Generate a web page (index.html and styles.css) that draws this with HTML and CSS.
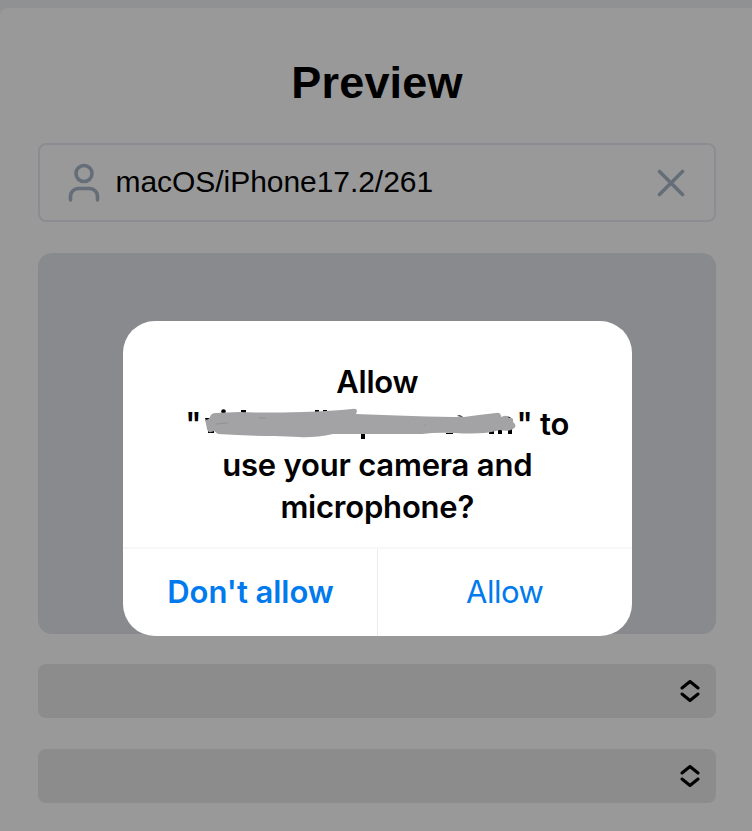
FILE: index.html
```html
<!DOCTYPE html>
<html lang="en">
<head>
<meta charset="utf-8">
<title>Preview</title>
<link rel="stylesheet" href="styles.css">
</head>
<body>
<main class="sheet">
  <h1 class="title">Preview</h1>
  <div class="field">
    <svg class="user" viewBox="0 0 34 40" width="34" height="40"><circle cx="17" cy="10.5" r="8"/><path d="M3.5 37v-3.5a8 8 0 0 1 8-8h11a8 8 0 0 1 8 8V37"/></svg>
    <span class="name">macOS/iPhone17.2/261</span>
    <svg class="clear" viewBox="0 0 28 28" width="28" height="28"><path d="M2.5 2.5l23 23M25.5 2.5l-23 23"/></svg>
  </div>
  <div class="video"></div>
  <div class="select"><svg class="chevrons" viewBox="0 0 20 24" width="20" height="24"><path d="M2 9l8-6.5L18 9M2 15l8 6.5L18 15"/></svg></div>
  <div class="select"><svg class="chevrons" viewBox="0 0 20 24" width="20" height="24"><path d="M2 9l8-6.5L18 9M2 15l8 6.5L18 15"/></svg></div>
</main>
<div class="dialog" role="alertdialog">
  <div class="message">
    <span class="line">Allow</span>
    <span class="line"><span>"</span><svg class="redaction" viewBox="203 404 314 40" width="314" height="40"><path class="trace" d="M205 419h4l2 4h-5zM208 432h6v2h-6zM241 411h5v3h-5zM315 411h4v3h-4zM323 411h4v3h-4zM361 434h4v6h-4zM446 434h7v1h-7zM489 432h5v3h-5zM498 430h4v5h-4zM508 429h4v6h-4zM457 417q3-2 6 1zM505 419q3-3 6 0z"/><circle class="trace" cx="223.5" cy="412.5" r="2.3"/><path class="brush" d="M205 420Q208 422 210 418Q211 414 216 414L239 413Q261 414 303 413Q332 412 352 410Q359 409 356 415Q382 416 412 417Q443 418 464 418Q478 416 496 414Q501 413 501 418Q508 415 509 419Q514 418 513 423Q518 427 513 430Q508 433 500 431Q484 436 455 434Q436 433 422 435L333 435Q314 439 299 438L275 437Q246 437 218 435L214 432Q208 435 207 430Z"/><path class="gap" d="M216 425l11-1M259 419h6M425 426h1"/></svg><span>" to</span></span>
    <span class="line">use your camera and</span>
    <span class="line">microphone?</span>
  </div>
  <div class="actions">
    <button class="deny">Don't allow</button>
    <button class="accept">Allow</button>
  </div>
</div>
</body>
</html>
```

FILE: styles.css
```css
* { box-sizing: border-box; }
body {
  margin: 0;
  height: 831px;
  padding-top: 8px;
  overflow: hidden;
  background: #8f9193;
  font-family: "Liberation Sans", Arial, sans-serif;
}
.sheet {
  height: 823px;
  padding: 47px 36px 0 38px;
  background: #999;
  border-top-left-radius: 8px;
  display: flex;
  flex-direction: column;
}
.title {
  margin: 0 0 33px;
  height: 55px;
  line-height: 55px;
  font-size: 45px;
  letter-spacing: .2px;
  text-align: center;
}
.field {
  height: 79px;
  padding: 0 29px 0 26.5px;
  border: 2px solid #8c8d92;
  border-radius: 8px;
  display: flex;
  align-items: center;
}
svg { fill: none; stroke-linecap: round; stroke-linejoin: round; flex: none; }
.user, .clear { stroke: #656d78; stroke-width: 3.6; }
.name { flex: 1; margin-left: 15px; padding-bottom: 2px; font-size: 30px; letter-spacing: -.05px; }
.video { height: 380.5px; margin-top: 31px; border-radius: 14px; background: #898a8e; }
.select {
  height: 54px;
  margin-top: 30.5px;
  padding-right: 16px;
  border-radius: 8px;
  background: #8c8c8c;
  display: flex;
  align-items: center;
  justify-content: flex-end;
}
.select + .select { margin-top: 31px; }
.chevrons { stroke: #000; stroke-width: 3; }
.dialog {
  position: absolute;
  left: 123px;
  top: 321px;
  width: 508.5px;
  height: 314.5px;
  border-radius: 32px;
  overflow: hidden;
  background: #fff;
  color: #000;
  font-family: Inter, sans-serif;
  font-size: 31px;
  font-weight: 560;
  letter-spacing: -.2px;
}
.message { height: 226px; padding-top: 40px; }
.line {
  display: flex;
  justify-content: center;
  align-items: center;
  height: 41.5px;
  white-space: pre;
}
.redaction { margin: 0 -1px 0 2px; }
.brush { fill: #a3a3a5; }
.trace { fill: #000; }
.gap { stroke: #929294; stroke-width: 1; }
.actions {
  height: 88.5px;
  border-top: 2px solid #f7f7f7;
  display: grid;
  grid-template-columns: 255px 1fr;
}
button {
  margin: 0;
  padding: 0 0 1px 1px;
  border: 0;
  background: none;
  color: #007aed;
  font: inherit;
}
.deny { border-right: 1px solid #ececec; font-weight: 600; letter-spacing: -.05px; }
.accept { padding-left: 0; font-weight: 400; letter-spacing: -.5px; }
```
